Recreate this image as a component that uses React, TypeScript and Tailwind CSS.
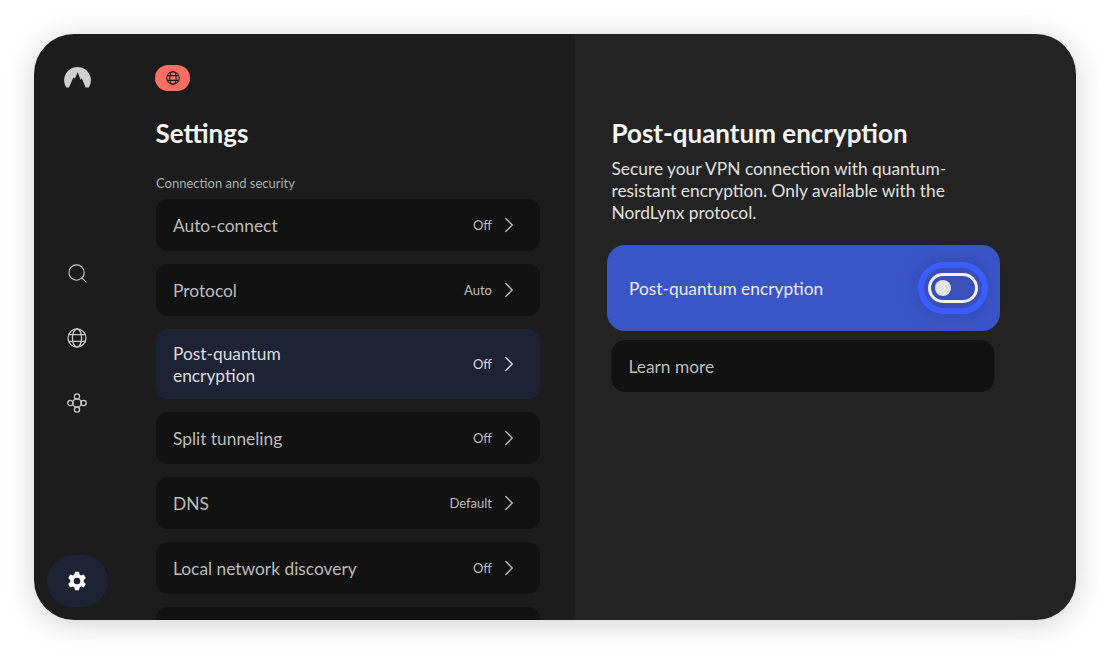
import React from 'react';
import { ChevronRight, Search } from 'lucide-react';

const Globe: React.FC<{ size: number; stroke: string; width?: number }> = ({ size, stroke, width = 1.5 }) => (
  <svg width={size} height={size} viewBox="0 0 20 20" fill="none" stroke={stroke} strokeWidth={width}>
    <circle cx="10" cy="10" r="9" />
    <ellipse cx="10" cy="10" rx="4.6" ry="9" />
    <path d="M1.8 6.6h16.4M1.8 13.4h16.4" />
  </svg>
);

const Mesh = () => (
  <svg width="20" height="20" viewBox="0 0 20 20" fill="none" stroke="#c8c8c8" strokeWidth="1.3">
    <circle cx="10" cy="3.4" r="2.6" />
    <circle cx="10" cy="16.6" r="2.6" />
    <circle cx="3.4" cy="10" r="2.6" />
    <circle cx="16.6" cy="10" r="2.6" />
    <circle cx="10" cy="10" r="4.2" />
  </svg>
);

const Gear = () => (
  <svg width="20" height="20" viewBox="0 0 24 24" fill="#fff" fillRule="evenodd">
    <path d="M9.6 1h4.8l.7 3.2 1.9 1.1 3.1-1 2.4 4.2-2.4 2.2v2.6l2.4 2.2-2.4 4.2-3.1-1-1.9 1.1-.7 3.2H9.6l-.7-3.2-1.9-1.1-3.1 1-2.4-4.2 2.4-2.2v-2.6L1.5 8.5l2.4-4.2 3.1 1 1.9-1.1zM12 8a4 4 0 1 0 0 8 4 4 0 0 0 0-8z" />
  </svg>
);

const Logo = () => (
  <svg width="27" height="23" viewBox="0 0 27 23">
    <path
      fill="#cfcfcf"
      d="M2.2 21.6A13.4 13.4 0 1 1 24.8 21.6L21.6 21.6 17.8 12.2 16.6 13.8 13.7 6.2 10.8 12.8 9.4 11.2 5 21.6z"
    />
  </svg>
);

const rows = [
  { label: 'Auto-connect', value: 'Off' },
  { label: 'Protocol', value: 'Auto' },
  { label: 'Post-quantum encryption', value: 'Off', active: true },
  { label: 'Split tunneling', value: 'Off' },
  { label: 'DNS', value: 'Default' },
  { label: 'Local network discovery', value: 'Off' },
  { label: '', value: '' },
];

export default function App() {
  return (
    <div className="w-[1110px] h-[654px] bg-white p-[34px] font-['Lato',sans-serif]">
      <div className="flex w-[1042px] h-[586px] rounded-[40px] overflow-hidden shadow-[0_4px_30px_rgba(0,0,0,0.18)]">
        <div className="flex w-[541px] bg-[#1c1c1c]">
          <div className="w-[61px] ml-[13px] flex flex-col items-center">
            <div className="mt-[32px] -ml-px">
              <Logo />
            </div>
            <div className="mt-[173px] h-5 flex items-center justify-center -ml-[1px] translate-y-px">
              <Search size={23} strokeWidth={1.15} color="#c8c8c8" />
            </div>
            <div className="mt-[45px] -ml-px translate-y-px">
              <Globe size={20} stroke="#c8c8c8" width={1.3} />
            </div>
            <div className="mt-[45px] -ml-px translate-y-px">
              <Mesh />
            </div>
            <div className="mt-[143px] w-[61px] h-[52px] rounded-[26px] bg-[#1e2235] flex items-center justify-center">
              <span className="-ml-px">
                <Gear />
              </span>
            </div>
          </div>
          <div className="w-[384px] ml-[48px]">
            <div className="mt-[31px] -ml-[1px] w-[35px] h-[26px] rounded-[13px] bg-[#ff6f61] flex items-center justify-center">
              <Globe size={14} stroke="#1c1c1c" width={1.5} />
            </div>
            <h1 className="mt-[26px] -ml-[0.5px] text-[26px] leading-[32px] font-bold text-[#f6f6f6]">Settings</h1>
            <p className="mt-[26px] text-[13px] leading-[16px] text-[#ababab]">Connection and security</p>
            <div className="mt-[8px] flex flex-col gap-[13px]">
              {rows.map((row, i) => (
                <div
                  key={i}
                  className={`flex items-center justify-between shrink-0 rounded-[12px] pl-[17px] pr-[18px] ${
                    row.active ? 'h-[70px] bg-[#1e2235]' : 'h-[52px] bg-[#121212]'
                  }`}
                >
                  <span className={`translate-y-px text-[17.35px] leading-[22px] ${row.active ? 'w-[150px] text-[#dcdcdc]' : 'text-[#bcbcbc]'}`}>
                    {row.label}
                  </span>
                  {row.value && (
                    <span className={`flex items-center gap-[4px] text-[13px] ${row.active ? 'text-[#dcdcdc]' : 'text-[#bcbcbc]'}`}>
                      <span className="translate-y-px">{row.value}</span>
                      <ChevronRight size={26} strokeWidth={1.2} />
                    </span>
                  )}
                </div>
              ))}
            </div>
          </div>
        </div>
        <div className="flex-1 bg-[#232323] pl-[32px] pr-[76px]">
          <div className="pl-[5px]">
            <h2 className="mt-[83px] -ml-[0.5px] text-[26px] leading-[32px] font-bold text-[#f6f6f6] whitespace-nowrap">Post-quantum encryption</h2>
            <p className="mt-[9px] -ml-[0.5px] text-[17.35px] leading-[22px] text-[#e0e0e0] w-[360px]">
              Secure your VPN connection with quantum-resistant encryption. Only available with the NordLynx protocol.
            </p>
          </div>
          <div className="mt-[21px] h-[86px] rounded-[18px] bg-[#3a55c8] flex items-center justify-between pl-[22px] pr-[12px]">
            <span className="text-[17.35px] text-[#ececec] translate-y-px">Post-quantum encryption</span>
            <div className="w-[70px] h-[52px] rounded-full border-[6px] border-[#3b5cff] bg-[#3a4fb8] shadow-[0_0_18px_rgba(40,50,110,0.35)] flex items-center justify-center">
              <div className="w-[50px] h-[30px] rounded-full border-[3px] border-[#f2f2f2] flex items-center pl-[4px]">
                <div className="w-4 h-4 rounded-full bg-[#e4e4e4]" />
              </div>
            </div>
          </div>
          <div className="mt-[9px] mx-[5px] -translate-x-[0.5px] h-[52px] rounded-[14px] bg-[#121212] flex items-center pl-[17px] text-[17.35px] text-[#bcbcbc]">
            <span className="translate-y-px">Learn more</span>
          </div>
        </div>
      </div>
    </div>
  );
}
